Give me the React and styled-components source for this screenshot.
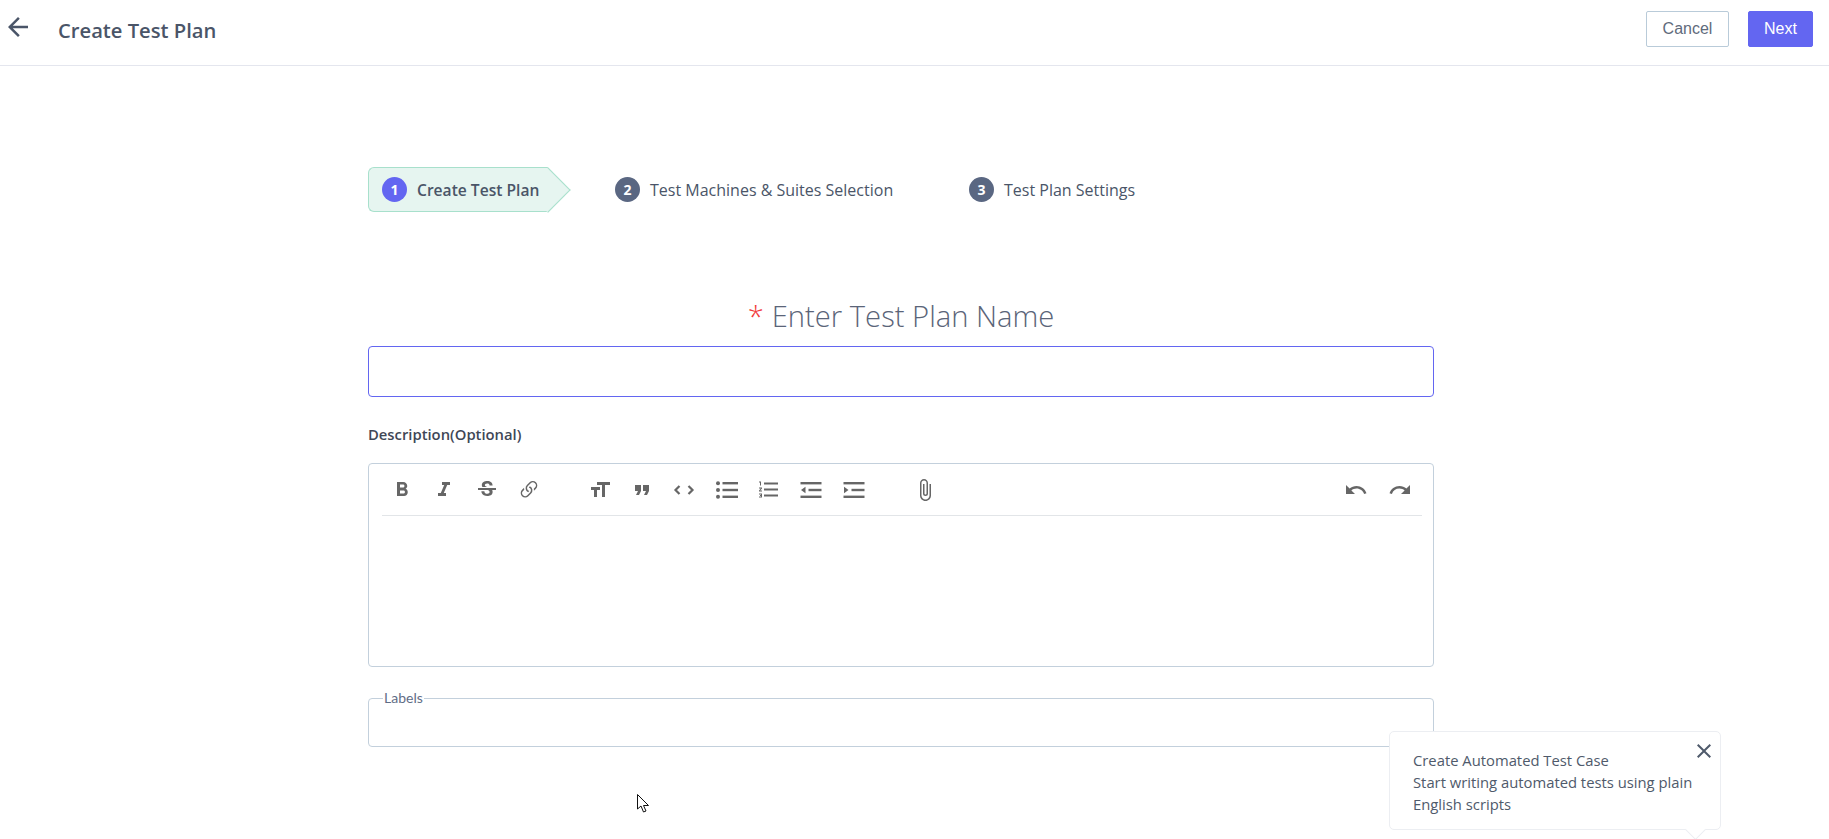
import styled, { createGlobalStyle } from "styled-components";

// Icons
import {
  MdArrowBack,
  MdAttachFile,
  MdClose,
  MdFormatBold,
  MdFormatItalic,
  MdFormatListNumbered,
  MdFormatQuote,
  MdFormatSize,
  MdRedo,
  MdStrikethroughS,
  MdUndo,
} from "react-icons/md";
import { BsLink45Deg } from "react-icons/bs";

const GlobalStyle = createGlobalStyle`
  html, body {
    margin: 0;
    padding: 0;
    background: #fff;
    overflow: hidden;
  }
  body {
    font-family: "Open Sans", "Noto Sans", sans-serif;
    color: #4a5568;
  }
`;

const Page = styled.div`
  position: relative;
  width: 1829px;
  height: 839px;
  overflow: hidden;
`;

const Header = styled.header`
  display: flex;
  align-items: center;
  height: 66px;
  padding: 0 16px 0 3px;
  box-sizing: border-box;
  border-bottom: 1px solid #e4e6ee;
`;

const BackButton = styled.div`
  display: flex;
  width: 30px;
  margin-top: -12px;
  margin-right: 25px;
  font-size: 30px;
  color: #4a5568;
`;

const Title = styled.h1`
  flex: 1;
  margin: 0 0 6px;
  font-size: 20.2px;
  font-weight: 600;
  color: #4a5568;
`;

const Button = styled.button`
  height: 36px;
  margin-left: 19px;
  margin-bottom: 8px;
  padding: 0;
  width: ${(p) => (p.$primary ? "65px" : "83px")};
  box-sizing: border-box;
  border-radius: 2px;
  border: 1px solid ${(p) => (p.$primary ? "#6366f1" : "#b9cbd9")};
  background: ${(p) => (p.$primary ? "#6366f1" : "#fff")};
  color: ${(p) => (p.$primary ? "#fff" : "#5f6b7c")};
  font-family: "Liberation Sans", Arial, sans-serif;
  font-size: 16px;
`;

const Main = styled.main`
  width: 1066px;
  margin-left: 368px;
  padding-top: 101px;
`;

const Stepper = styled.div`
  display: flex;
  align-items: center;
  height: 45px;
`;

const ActivePill = styled.div`
  position: relative;
  display: flex;
  align-items: center;
  width: 180px;
  height: 45px;
  box-sizing: border-box;
  padding-left: 13px;
  margin-right: 67px;
  background: #e6f5f0;
  border: 1px solid #a8e0cc;
  border-right: none;
  border-radius: 6px 0 0 6px;
  &::after {
    content: "";
    position: absolute;
    right: -16px;
    top: 5.5px;
    width: 31px;
    height: 31px;
    background: #e6f5f0;
    border-top: 1px solid #a8e0cc;
    border-right: 1px solid #a8e0cc;
    transform: rotate(45deg);
  }
`;

const Step = styled.div`
  display: flex;
  align-items: center;
  width: ${(p) => p.$width};
`;

const StepNumber = styled.span`
  display: flex;
  align-items: center;
  justify-content: center;
  flex: none;
  width: 25px;
  height: 25px;
  margin-right: 10px;
  border-radius: 50%;
  background: ${(p) => (p.$active ? "#6366f1" : "#5a6782")};
  color: #fff;
  font-size: 14px;
  font-weight: 700;
`;

const StepLabel = styled.span`
  position: relative;
  z-index: 1;
  white-space: nowrap;
  font-size: ${(p) => (p.$active ? "15.6px" : "16px")};
  font-weight: ${(p) => (p.$active ? 600 : 400)};
  color: #4a5568;
`;

const PlanName = styled.div`
  margin-top: 83px;
  height: 51px;
  line-height: 43px;
  text-align: center;
  font-size: 29.2px;
  font-weight: 300;
  color: #5a6478;
`;

const Required = styled.span`
  color: #f23b3b;
  margin-right: 8px;
`;

const NameInput = styled.div`
  height: 51px;
  box-sizing: border-box;
  border: 1px solid #6366f1;
  border-radius: 4px;
`;

const FieldLabel = styled.div`
  margin-top: 27px;
  height: 20px;
  line-height: 20px;
  font-size: 14.8px;
  font-weight: 600;
  color: #3f4756;
`;

const Editor = styled.div`
  margin-top: 19px;
  height: 204px;
  box-sizing: border-box;
  padding: 0 11px 0 13px;
  border: 1px solid #c3d0dc;
  border-radius: 4px;
`;

const Toolbar = styled.div`
  display: flex;
  align-items: center;
  height: 51px;
  padding: 0 0 0 8px;
  border-bottom: 1px solid #e2e5e8;
  color: #666;
`;

const ToolGroup = styled.div`
  display: flex;
  align-items: center;
  gap: ${(p) => p.$gap || "18.3px"};
  margin-right: ${(p) => p.$after || "0"};
  margin-left: ${(p) => p.$before || "0"};
`;

const Tool = styled.span`
  display: flex;
  justify-content: center;
  width: 24px;
  font-size: ${(p) => p.$size || "24px"};
`;

const LabelsField = styled.fieldset`
  margin: 23px 0 0;
  padding: 0 0 0 14px;
  height: 57px;
  box-sizing: border-box;
  border: 1px solid #c3d0dc;
  border-radius: 4px;
`;

const LabelsLegend = styled.legend`
  padding: 0 1px;
  font-family: Lato, "Open Sans", sans-serif;
  font-size: 14px;
  line-height: 16px;
  color: #5f6d86;
`;

const Tooltip = styled.div`
  position: absolute;
  left: 1389px;
  top: 731px;
  width: 332px;
  height: 99px;
  box-sizing: border-box;
  padding: 17px 23px 0;
  background: #fff;
  border: 1px solid #eceef2;
  border-radius: 5px;
  font-size: 14.8px;
  line-height: 22px;
  color: #4f5a6b;
  &::after {
    content: "";
    position: absolute;
    left: 298px;
    bottom: -8px;
    width: 14px;
    height: 14px;
    background: #fff;
    border-right: 1px solid #eceef2;
    border-bottom: 1px solid #eceef2;
    transform: rotate(45deg);
  }
`;

const CloseIcon = styled(MdClose)`
  position: absolute;
  right: 4px;
  top: 7px;
  font-size: 24px;
  color: #4f5a6b;
`;

const Cursor = styled.svg`
  position: absolute;
  left: 637px;
  top: 794px;
`;

const CodeIcon = () => (
  <svg width="24" height="24" viewBox="0 0 24 24" fill="none" stroke="currentColor" strokeWidth="2.2">
    <path d="M7.5 8 L3.5 12 L7.5 16" />
    <path d="M16.5 8 L20.5 12 L16.5 16" />
  </svg>
);

const BulletIcon = () => (
  <svg width="24" height="24" viewBox="0 0 24 24" fill="currentColor">
    <circle cx="3" cy="5.2" r="2" />
    <circle cx="3" cy="12" r="2" />
    <circle cx="3" cy="18.8" r="2" />
    <rect x="7.5" y="4" width="15.5" height="2.4" />
    <rect x="7.5" y="10.8" width="15.5" height="2.4" />
    <rect x="7.5" y="17.6" width="15.5" height="2.4" />
  </svg>
);

const OutdentIcon = () => (
  <svg width="24" height="24" viewBox="0 0 24 24" fill="currentColor">
    <rect x="1.5" y="4" width="21" height="2.4" />
    <rect x="9.5" y="10.8" width="13" height="2.4" />
    <rect x="1.5" y="17.6" width="21" height="2.4" />
    <path d="M6.5 8.8 L2 12 L6.5 15.2 Z" />
  </svg>
);

const IndentIcon = () => (
  <svg width="24" height="24" viewBox="0 0 24 24" fill="currentColor">
    <rect x="1.5" y="4" width="21" height="2.4" />
    <rect x="9.5" y="10.8" width="13" height="2.4" />
    <rect x="1.5" y="17.6" width="21" height="2.4" />
    <path d="M2 8.8 L6.5 12 L2 15.2 Z" />
  </svg>
);

const steps = [
  { n: 2, text: "Test Machines & Suites Selection", width: "354px" },
  { n: 3, text: "Test Plan Settings", width: "auto" },
];

const App = () => {
  return (
    <Page>
      <GlobalStyle />
      <Header>
        <BackButton>
          <MdArrowBack />
        </BackButton>
        <Title>Create Test Plan</Title>
        <Button>Cancel</Button>
        <Button $primary>Next</Button>
      </Header>
      <Main>
        <Stepper>
          <ActivePill>
            <StepNumber $active>1</StepNumber>
            <StepLabel $active>Create Test Plan</StepLabel>
          </ActivePill>
          {steps.map((s) => (
            <Step key={s.n} $width={s.width}>
              <StepNumber>{s.n}</StepNumber>
              <StepLabel>{s.text}</StepLabel>
            </Step>
          ))}
        </Stepper>

        <PlanName>
          <Required>*</Required>Enter Test Plan Name
        </PlanName>
        <NameInput />

        <FieldLabel>Description(Optional)</FieldLabel>
        <Editor>
          <Toolbar>
            <ToolGroup $after="47px">
              <Tool $size="26px"><MdFormatBold /></Tool>
              <Tool $size="26px"><MdFormatItalic /></Tool>
              <Tool $size="28px"><MdStrikethroughS /></Tool>
              <Tool $size="28px"><BsLink45Deg /></Tool>
            </ToolGroup>
            <ToolGroup $after="47px">
              <Tool $size="26px"><MdFormatSize /></Tool>
              <Tool><MdFormatQuote /></Tool>
              <Tool><CodeIcon /></Tool>
              <Tool><BulletIcon /></Tool>
              <Tool $size="27px"><MdFormatListNumbered /></Tool>
              <Tool><OutdentIcon /></Tool>
              <Tool><IndentIcon /></Tool>
            </ToolGroup>
            <Tool $size="26px"><MdAttachFile /></Tool>
            <ToolGroup $gap="20px" $before="auto" $after="10px">
              <Tool $size="28px"><MdUndo /></Tool>
              <Tool $size="28px"><MdRedo /></Tool>
            </ToolGroup>
          </Toolbar>
        </Editor>

        <LabelsField>
          <LabelsLegend>Labels</LabelsLegend>
        </LabelsField>
      </Main>

      <Tooltip>
        <CloseIcon />
        Create Automated Test Case
        <br />
        Start writing automated tests using plain
        <br />
        English scripts
      </Tooltip>

      <Cursor width="13" height="20" viewBox="0 0 13 20">
        <path d="M0.5 0.5 V15 L4 12 L6.5 18 L9 17 L6.5 11.5 H11.5 Z" fill="#fff" stroke="#111" strokeWidth="1" />
      </Cursor>
    </Page>
  );
};

export default App;
